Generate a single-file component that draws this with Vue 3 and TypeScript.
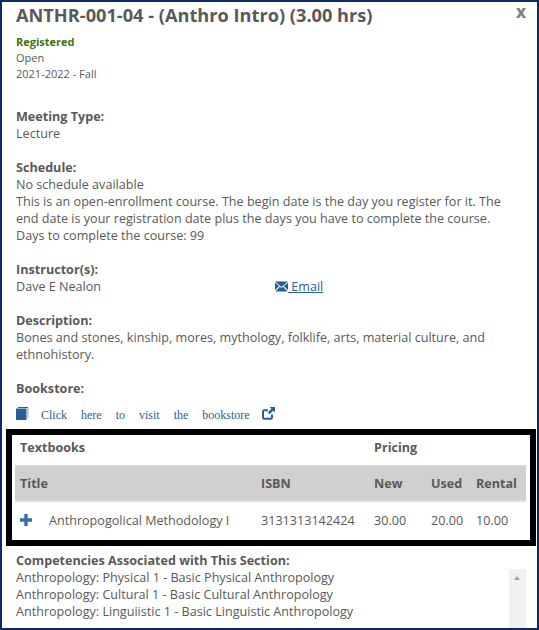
<script setup lang="ts">
const competencies: string[] = [
  'Anthropology: Physical 1 - Basic Physical Anthropology',
  'Anthropology: Cultural 1 - Basic Cultural Anthropology',
  'Anthropology: Linguiistic 1 - Basic Linguistic Anthropology',
]
</script>

<template>
  <div class="dialog">
    <span class="close">X</span>
    <h1 class="title">ANTHR-001-04 - (Anthro Intro) (3.00 hrs)</h1>
    <div class="meta">
      <div class="registered">Registered</div>
      <div>Open</div>
      <div>2021-2022 - Fall</div>
    </div>

    <section class="block meeting">
      <div class="label">Meeting Type:</div>
      <div>Lecture</div>
    </section>

    <section class="block">
      <div class="label">Schedule:</div>
      <div>No schedule available</div>
      <div>This is an open-enrollment course. The begin date is the day you register for it. The end date is your registration date plus the days you have to complete the course.</div>
      <div>Days to complete the course: 99</div>
    </section>

    <section class="block">
      <div class="label">Instructor(s):</div>
      <div class="instructor">
        <span class="name">Dave E Nealon</span>
        <a class="email">
          <svg class="mail" viewBox="0 0 14 11" width="13" height="11">
            <path d="M0 0h14L7 6z" fill="#2a5f96" />
            <path d="M0 1.500 4.500 5 0 9.500zM14 1.500 9.500 5l4.500 4.500zM5.300 5.700 7 7l1.700-1.300L13.500 11H.5z" fill="#2a5f96" />
          </svg><span class="email-text">&nbsp;Email</span>
        </a>
      </div>
    </section>

    <section class="block">
      <div class="label">Description:</div>
      <div>Bones and stones, kinship, mores, mythology, folklife, arts, material culture, and ethnohistory.</div>
    </section>

    <section class="block">
      <div class="label">Bookstore:</div>
      <div class="bookstore">
        <svg class="book" viewBox="0 0 13 14" width="13" height="14">
          <path d="M2 0h10v1H2z" fill="#2a5f96" />
          <path d="M11 1h1.500v10H11z" fill="#a9c0d8" />
          <path d="M0 1.500h10.500V13H0z" fill="#2a5f96" />
        </svg>
        <a class="store-link">Click here to visit the bookstore</a>
        <svg class="ext" viewBox="0 0 13 13" width="13" height="13">
          <path d="M10 7.500v2.800c0 .9-.5 1.500-1.400 1.500H2.400c-.9 0-1.400-.6-1.400-1.500V4.600c0-.9.500-1.400 1.400-1.400H6" fill="none" stroke="#2a5f96" stroke-width="2" />
          <path d="M7.500 0H13v5.500l-1.800-1.800-3.500 3.600-1.900-1.900 3.500-3.600z" fill="#2a5f96" />
        </svg>
      </div>
    </section>

    <div class="books-frame">
      <div class="books">
        <div class="row caption">
          <span class="wide">Textbooks</span>
          <span class="wide-price">Pricing</span>
        </div>
        <div class="row head">
          <span>Title</span>
          <span>ISBN</span>
          <span>New</span>
          <span>Used</span>
          <span>Rental</span>
        </div>
        <div class="row item">
          <span class="book-title">
            <svg class="plus" viewBox="0 0 12 12" width="12" height="12">
              <path d="M4.300 0h3.400v4.300H12v3.400H7.700V12H4.300V7.700H0V4.300h4.300z" fill="#3a6ea8" />
            </svg>
            Anthropogolical Methodology I
          </span>
          <span>3131313142424</span>
          <span>30.00</span>
          <span>20.00</span>
          <span>10.00</span>
        </div>
      </div>
    </div>

    <section class="competencies">
      <div class="label">Competencies Associated with This Section:</div>
      <div class="comp-body">
        <div class="comp-list">
          <div v-for="c in competencies" :key="c">{{ c }}</div>
        </div>
        <div class="scrollbar"><span class="arrow"></span></div>
      </div>
    </section>
  </div>
</template>

<style scoped>
.dialog {
  position: relative;
  box-sizing: border-box;
  width: 539px;
  height: 630px;
  overflow: hidden;
  border: 2px solid #0b2a66;
  background: #fff;
  padding: 0 0 0 14px;
  font-family: "Open Sans", sans-serif;
  font-size: 12.600px;
  line-height: 17px;
  color: #595959;
}
.close {
  position: absolute;
  top: 2px;
  right: 11px;
  font-size: 14px;
  font-weight: 800;
  line-height: 18px;
  color: #808080;
}
.title {
  margin: 1px 0 0;
  font-size: 18.200px;
  line-height: 24px;
  font-weight: 700;
  color: #595959;
}
.meta {
  margin-top: 7px;
  font-size: 11px;
  line-height: 16px;
}
.registered {
  font-weight: 700;
  color: #3f7012;
}
.block {
  margin-top: 17px;
  padding-right: 20px;
}
.meeting {
  margin-top: 26px;
}
.label {
  font-weight: 700;
}
.instructor {
  display: flex;
}
.name {
  width: 259px;
}
.email {
  display: flex;
  align-items: center;
  color: #2a5f96;
}
.mail {
  flex: none;
}
.email-text {
  text-decoration: underline;
}
.bookstore {
  display: flex;
  align-items: center;
  margin-top: 11px;
  height: 14px;
}
.book {
  margin-top: -2px;
}
.store-link {
  margin-left: 12px;
  font-family: "Liberation Serif", serif;
  font-size: 12px;
  word-spacing: 11px;
  color: #2a5f96;
  white-space: nowrap;
}
.ext {
  margin-left: 12px;
  margin-top: -3px;
}
.books-frame {
  box-sizing: border-box;
  width: 530px;
  height: 117px;
  margin: 7px 0 0 -10px;
  padding: 0 3px;
  border: 6px solid #000;
  background: #fff;
}
.books {
  width: 511px;
}
.row {
  display: grid;
  grid-template-columns: 241px 113px 57px 45px 50px;
  padding-left: 5px;
  align-items: center;
}
.caption {
  height: 30px;
  padding-bottom: 6px;
  box-sizing: border-box;
  font-weight: 700;
}
.caption .wide {
  grid-column: 1 / 3;
}
.caption .wide-price {
  grid-column: 3 / 6;
}
.head {
  height: 37px;
  box-sizing: border-box;
  background: #d0d0d0;
  border-top: 1px solid #dadada;
  border-bottom: 2px solid #dedede;
  font-weight: 700;
}
.item {
  height: 38px;
  box-sizing: border-box;
  padding-bottom: 2px;
}
.book-title {
  display: flex;
  align-items: center;
  white-space: nowrap;
}
.plus {
  margin-right: 17px;
  flex: none;
}
.competencies {
  margin-top: 6px;
}
.comp-body {
  display: flex;
  justify-content: space-between;
  width: 510px;
}
.scrollbar {
  width: 17px;
  height: 60px;
  background: #f1f1f1;
  position: relative;
}
.arrow {
  position: absolute;
  top: 7px;
  left: 5px;
  border-left: 3.500px solid transparent;
  border-right: 3.500px solid transparent;
  border-bottom: 4px solid #a3a3a3;
}
</style>
